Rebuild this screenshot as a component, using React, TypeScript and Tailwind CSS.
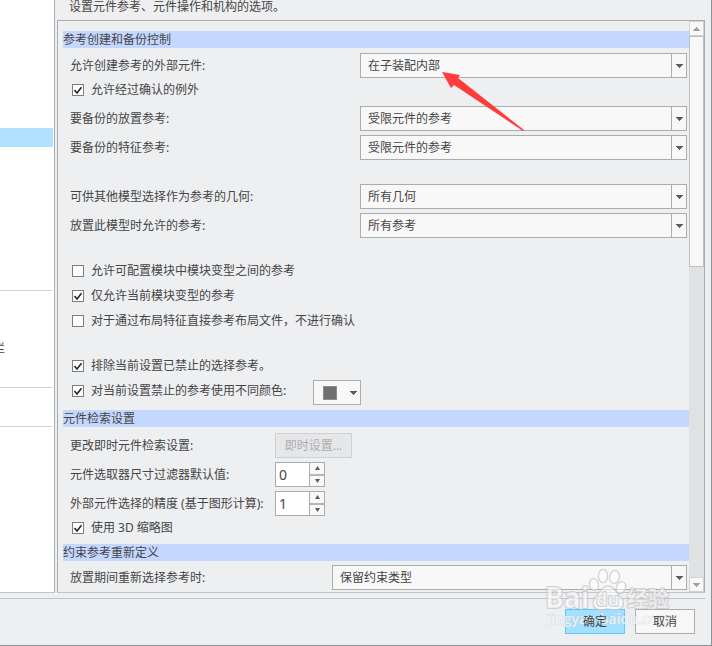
import { useId, useState } from "react";
import type { ReactNode } from "react";

const DownArrow = ({ className = "fill-[#5c5c5c]" }: { className?: string }) => (
  <svg width="7" height="4" viewBox="0 0 7 4" shapeRendering="crispEdges" aria-hidden="true" className={className}>
    <path d="M0 0h7v1H6v1H5v1H4v1H3V3H2V2H1V1H0z" />
  </svg>
);

const SectionTitle = ({ children, className }: { children: ReactNode; className: string }) => (
  <h2 className={`h-[17px] bg-[#c4d7ff] leading-[17px] ${className}`}>{children}</h2>
);

interface SelectRowProps {
  label: string;
  options: string[];
  className?: string;
  labelWidth?: string;
}

const SelectRow = ({ label, options, className = "", labelWidth = "w-[290px]" }: SelectRowProps) => {
  const id = useId();
  return (
    <div className={`flex h-[25px] items-center pl-[7px] pr-[2px] ${className}`}>
      <label htmlFor={id} className={`shrink-0 ${labelWidth}`}>
        {label}
      </label>
      <div className="grid h-full min-w-0 flex-1 grid-cols-[1fr_15px] border border-[#aaacae] bg-[#f8f8f8]">
        <select
          id={id}
          className="col-span-2 col-start-1 row-start-1 h-full w-full appearance-none bg-transparent pl-[7px] pr-4 outline-none"
        >
          {options.map((option) => (
            <option key={option}>{option}</option>
          ))}
        </select>
        <span className="pointer-events-none col-start-2 row-start-1 flex items-center justify-center border-l border-[#aaacae]">
          <DownArrow />
        </span>
      </div>
    </div>
  );
};

interface CheckRowProps {
  children: ReactNode;
  checked?: boolean;
  className?: string;
}

const CheckRow = ({ children, checked = false, className = "h-[25px]" }: CheckRowProps) => (
  <label className={`flex items-center pl-[9px] ${className}`}>
    <span className="mr-[7px] grid size-3 shrink-0">
      <input
        type="checkbox"
        defaultChecked={checked}
        className="peer col-start-1 row-start-1 size-3 appearance-none border border-[#7d7d7d] bg-white"
      />
      <svg
        viewBox="0 0 12 12"
        aria-hidden="true"
        className="pointer-events-none invisible col-start-1 row-start-1 size-3 fill-none stroke-[#262626] peer-checked:visible"
      >
        <path d="M2.5 6l2.5 3L9.5 3.2" strokeWidth="1.6" />
      </svg>
    </span>
    {children}
  </label>
);

const SpinRow = ({ label, initial, className = "" }: { label: string; initial: number; className?: string }) => {
  const id = useId();
  const [value, setValue] = useState(initial);
  return (
    <div className={`flex h-[25px] items-center pl-[7px] ${className}`}>
      <label htmlFor={id} className="w-[205px] shrink-0 whitespace-nowrap">
        {label}
      </label>
      <div className="flex h-full w-[50px] border border-[#aaacae] bg-white">
        <input
          id={id}
          type="text"
          inputMode="numeric"
          value={value}
          onChange={(e) => setValue(Number(e.target.value) || 0)}
          className="min-w-0 flex-1 pl-[3px] text-sm outline-none"
        />
        <div className="flex w-[15px] flex-col border-l border-[#aaacae] bg-[#f8f8f8]">
          <button
            type="button"
            aria-label="增加"
            onClick={() => setValue(value + 1)}
            className="flex flex-1 items-center justify-center border-b-2 border-[#b4b6b8]"
          >
            <svg width="5" height="4" viewBox="0 0 5 4" className="fill-[#5c5c5c]">
              <path d="M2.5 0L5 4H0z" />
            </svg>
          </button>
          <button
            type="button"
            aria-label="减少"
            onClick={() => setValue(value - 1)}
            className="flex flex-1 items-center justify-center"
          >
            <svg width="5" height="4" viewBox="0 0 5 4" className="fill-[#5c5c5c]">
              <path d="M2.5 4L5 0H0z" />
            </svg>
          </button>
        </div>
      </div>
    </div>
  );
};

const Sidebar = () => (
  <nav className="w-[55px] shrink-0 overflow-hidden border-b border-r border-b-[#c2c5c8] border-r-[#a9acaf] bg-white pr-px pt-32">
    <a href="#assembly" aria-label="装配" className="block h-[19px] bg-[#b0e2ff]" />
    <div className="mr-px mt-[143px] h-[97px] border-t border-[#d0d0d0] pt-[49px]">
      <a href="#toolbar" className="-ml-[7px] block leading-[18px]">
        栏
      </a>
    </div>
    <div className="mr-px h-10 border-y border-[#d0d0d0]" />
  </nav>
);

const Scrollbar = () => (
  <div className="flex w-[15px] shrink-0 flex-col bg-[#dfe1e3]">
    <button
      type="button"
      aria-label="向上滚动"
      className="flex h-[15px] items-center justify-center border border-[#d0d3d6] bg-[#f8f8f8]"
    >
      <DownArrow className="rotate-180 fill-[#a0a0a0]" />
    </button>
    <div className="h-[231px] border border-[#bdc0c3] bg-[#f8f8f8]" />
    <button
      type="button"
      aria-label="向下滚动"
      className="mt-auto flex h-[15px] items-center justify-center border border-[#d0d3d6] bg-[#f8f8f8]"
    >
      <DownArrow className="fill-[#a0a0a0]" />
    </button>
  </div>
);

const Watermark = () => (
  <svg
    width="130"
    height="64"
    viewBox="0 0 130 64"
    aria-hidden="true"
    className="pointer-events-none absolute bottom-[14px] right-9 font-['Open_Sans','Noto_Sans_CJK_SC',sans-serif]"
  >
    <g fill="#ffffff" fillOpacity="0.55" stroke="#c4c6c8" strokeOpacity="0.75" strokeWidth="1.3">
      <ellipse cx="58" cy="9" rx="4.6" ry="6.6" />
      <ellipse cx="69.5" cy="10" rx="4.8" ry="6.6" transform="rotate(12 69.5 10)" />
      <ellipse cx="49" cy="17.5" rx="4.6" ry="6" transform="rotate(-12 49 17.5)" />
      <ellipse cx="76" cy="20.5" rx="4.6" ry="6" transform="rotate(20 76 20.5)" />
      <path d="M63 19c-5 0-7 4-10 8-5 4-6 8-4 12 2 5 7 4 14 3 7 1 12 2 15-3 1-5 0-8-5-12-3-4-5-8-10-8z" />
    </g>
    <g
      fill="#ffffff"
      fillOpacity="0.6"
      stroke="#b9bbbd"
      strokeOpacity="0.6"
      strokeWidth="2"
      paintOrder="stroke"
      strokeLinejoin="round"
      fontWeight="700"
    >
      <text x="0" y="41" fontSize="28">Bai</text>
      <text x="51" y="39" fontSize="18">du</text>
      <text x="82" y="39" fontSize="21">经验</text>
    </g>
    <text
      x="2"
      y="57"
      fontSize="14"
      fontWeight="600"
      fill="#ffffff"
      fillOpacity="0.65"
      stroke="#cbced1"
      strokeOpacity="0.6"
      paintOrder="stroke"
    >
      jingyan.baidu.com
    </text>
  </svg>
);

export default function App() {
  return (
    <div className="relative flex flex-col overflow-hidden border-b border-r border-[#8f9194] bg-[#eeeff1] font-['Noto_Sans','Noto_Sans_CJK_SC',sans-serif] text-xs text-[#454545]">
      <div className="flex">
        <Sidebar />

        <main className="ml-[2px] mr-[6px] min-w-0 flex-1">
          <p className="h-5 pl-3 leading-[14px]">设置元件参考、元件操作和机构的选项。</p>

          <div className="flex border border-[#a9acaf] border-b-[#c2c5c8]">
            <div className="min-w-0 flex-1 pb-[2px] pl-[5px] pt-[10px]">
              <SectionTitle className="mb-[5px]">参考创建和备份控制</SectionTitle>
              <SelectRow label="允许创建参考的外部元件:" options={["在子装配内部"]} />
              <CheckRow checked className="mb-[5px] h-[23px]">
                允许经过确认的例外
              </CheckRow>
              <SelectRow label="要备份的放置参考:" options={["受限元件的参考"]} className="mb-1" />
              <SelectRow label="要备份的特征参考:" options={["受限元件的参考"]} className="mb-6" />
              <SelectRow label="可供其他模型选择作为参考的几何:" options={["所有几何"]} className="mb-1" />
              <SelectRow label="放置此模型时允许的参考:" options={["所有参考"]} className="mb-5" />

              <CheckRow>允许可配置模块中模块变型之间的参考</CheckRow>
              <CheckRow checked>仅允许当前模块变型的参考</CheckRow>
              <CheckRow>对于通过布局特征直接参考布局文件，不进行确认</CheckRow>

              <div className="mt-5">
                <CheckRow checked>排除当前设置已禁止的选择参考。</CheckRow>
                <div className="mb-[5px] flex h-[27px]">
                  <div className="w-[250px] shrink-0">
                    <CheckRow checked>对当前设置禁止的参考使用不同颜色:</CheckRow>
                  </div>
                  <button
                    type="button"
                    aria-label="颜色"
                    className="flex h-[25px] w-12 items-center justify-between self-end border border-[#aaacae] bg-[#f8f8f8] pl-[9px] pr-[3px]"
                  >
                    <span className="size-[14px] border border-[#8c8c8c] bg-[#707070]" />
                    <DownArrow />
                  </button>
                </div>
              </div>

              <SectionTitle className="mb-[6px]">元件检索设置</SectionTitle>
              <div className="mb-1 flex h-[25px] items-center pl-[7px]">
                <span className="w-[205px]">更改即时元件检索设置:</span>
                <button
                  type="button"
                  disabled
                  className="h-full w-[77px] border border-[#cfd1d3] bg-[#e6e7e9] text-[#adadad]"
                >
                  即时设置...
                </button>
              </div>
              <SpinRow label="元件选取器尺寸过滤器默认值:" initial={0} className="mb-1" />
              <SpinRow label="外部元件选择的精度 (基于图形计算):" initial={1} />
              <CheckRow checked className="mb-1 h-6">
                使用 3D 缩略图
              </CheckRow>

              <SectionTitle className="mb-1">约束参考重新定义</SectionTitle>
              <SelectRow label="放置期间重新选择参考时:" options={["保留约束类型"]} labelWidth="w-[262px]" />
            </div>
            <Scrollbar />
          </div>
        </main>
      </div>

      <footer className="mr-[6px] mt-[5px] flex justify-end gap-[10px] border-t border-[#c2c5c8] pb-[11px] pr-[10px] pt-[10px]">
        <button type="button" className="h-[25px] w-[60px] border border-[#62c8f8] bg-[#a3dfff]">
          <span className="relative z-10">确定</span>
        </button>
        <button type="button" className="h-[25px] w-[60px] border border-[#aaacae] bg-[#f8f8f8]">
          <span className="relative z-10">取消</span>
        </button>
      </footer>

      <svg
        width="82"
        height="60"
        viewBox="0 0 82 60"
        aria-hidden="true"
        className="pointer-events-none absolute left-[442px] top-[72px] fill-[#ff3b3b]"
      >
        <path d="M0 0L18 3L16 6L82 58L81 59L12 13L9 16z" />
      </svg>
      <Watermark />
    </div>
  );
}
